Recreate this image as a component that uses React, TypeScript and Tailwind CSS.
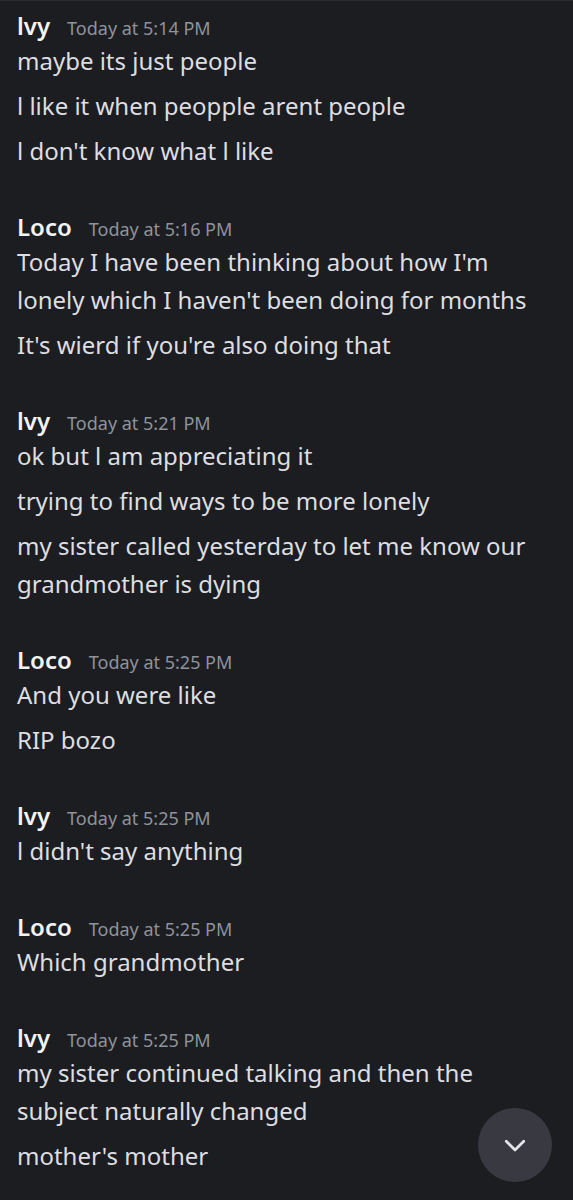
import React from "react";

type Group = { name: string; time: string; lines: string[] };

const groups: Group[] = [
  { name: "lvy", time: "Today at 5:14 PM", lines: ["maybe its just people", "l like it when peopple arent people", "l don't know what l like"] },
  { name: "Loco", time: "Today at 5:16 PM", lines: ["Today I have been thinking about how I'm lonely which I haven't been doing for months", "It's wierd if you're also doing that"] },
  { name: "lvy", time: "Today at 5:21 PM", lines: ["ok but l am appreciating it", "trying to find ways to be more lonely", "my sister called yesterday to let me know our grandmother is dying"] },
  { name: "Loco", time: "Today at 5:25 PM", lines: ["And you were like", "RIP bozo"] },
  { name: "lvy", time: "Today at 5:25 PM", lines: ["l didn't say anything"] },
  { name: "Loco", time: "Today at 5:25 PM", lines: ["Which grandmother"] },
  { name: "lvy", time: "Today at 5:25 PM", lines: ["my sister continued talking and then the subject naturally changed", "mother's mother"] },
];

export default function App() {
  return (
    <div
      className="relative w-[573px] h-[1200px] overflow-hidden bg-[#1c1d21] border-t border-[#2a2b30]"
      style={{ fontFamily: '"Noto Sans", "Open Sans", sans-serif' }}
    >
      <div className="flex flex-col gap-[41px] pt-[9px] pl-[17px] pr-[20px]">
        {groups.map((g, i) => (
          <div key={i} className="flex flex-col">
            <div className="flex items-baseline gap-[17px] h-[32px] leading-[32px]">
              <span className="text-[24px] font-semibold text-[#f2f3f5]">{g.name}</span>
              <span className="text-[18px] text-[#8e939c]">{g.time}</span>
            </div>
            <div className="flex flex-col gap-[7px]">
              {g.lines.map((l, j) => (
                <p key={j} className="text-[24px] leading-[38px] text-[#dcdee2]">{l}</p>
              ))}
            </div>
          </div>
        ))}
      </div>
      <div className="absolute left-[478px] top-[1107px] w-[74px] h-[74px] rounded-full bg-[#393a41] flex items-center justify-center">
        <svg width="30" height="30" viewBox="0 0 24 24" fill="none" stroke="#e3e5e8" strokeWidth="2.2" strokeLinecap="round" strokeLinejoin="round">
          <path d="M5 9l7 7 7-7" />
        </svg>
      </div>
    </div>
  );
}
